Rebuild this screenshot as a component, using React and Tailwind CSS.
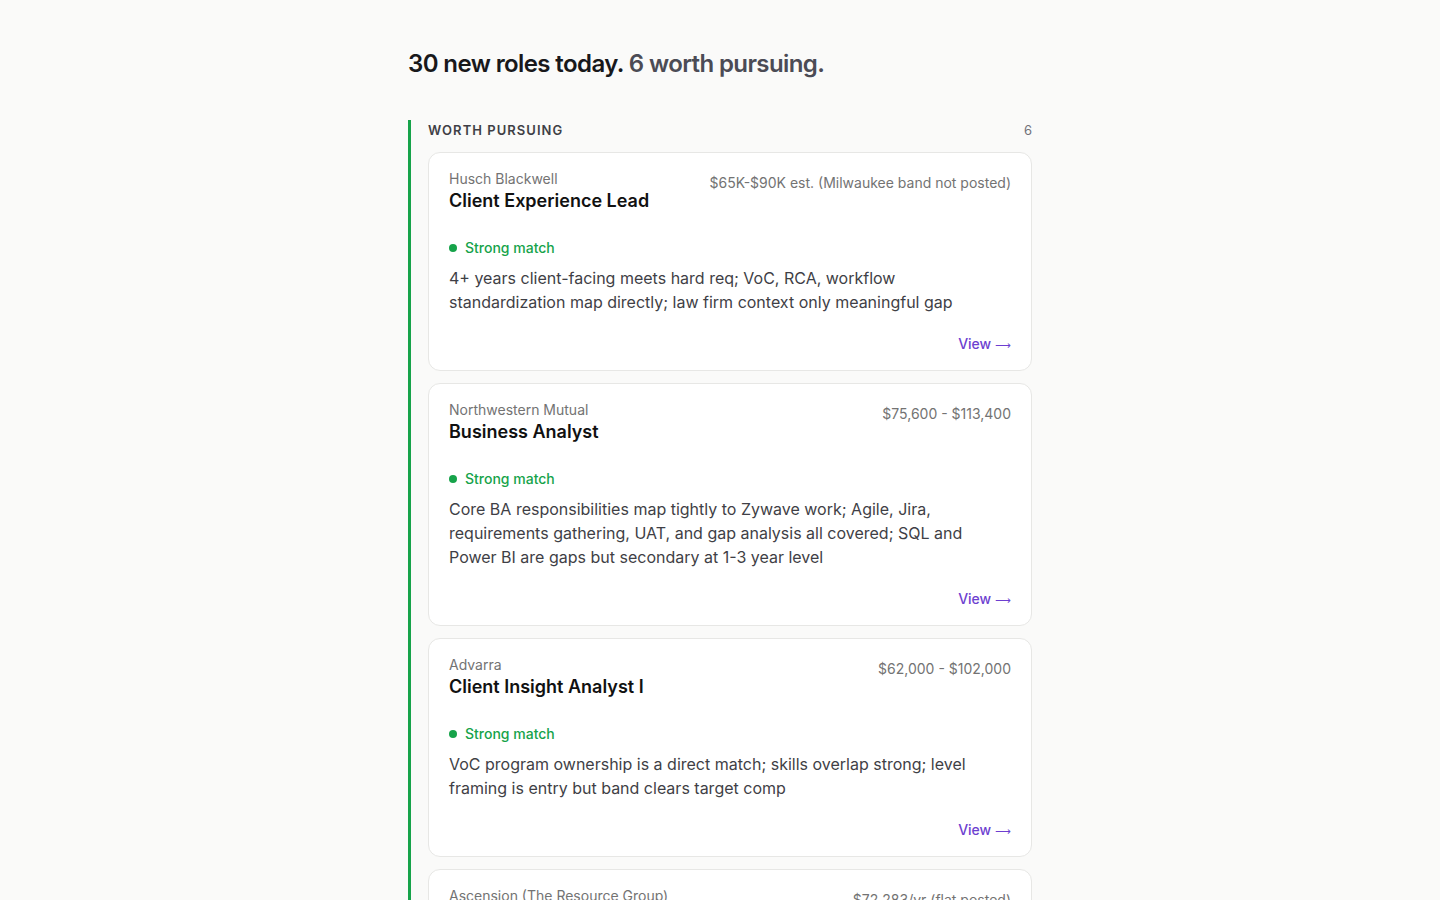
const roles = [
  {
    company: "Husch Blackwell",
    title: "Client Experience Lead",
    pay: "$65K-$90K est. (Milwaukee band not posted)",
    note: "4+ years client-facing meets hard req; VoC, RCA, workflow standardization map directly; law firm context only meaningful gap",
  },
  {
    company: "Northwestern Mutual",
    title: "Business Analyst",
    pay: "$75,600 - $113,400",
    note: "Core BA responsibilities map tightly to Zywave work; Agile, Jira, requirements gathering, UAT, and gap analysis all covered; SQL and Power BI are gaps but secondary at 1-3 year level",
  },
  {
    company: "Advarra",
    title: "Client Insight Analyst I",
    pay: "$62,000 - $102,000",
    note: "VoC program ownership is a direct match; skills overlap strong; level framing is entry but band clears target comp",
  },
  {
    company: "Ascension (The Resource Group)",
    title: "Patient Experience Analyst",
    pay: "$72,283/yr (flat posted)",
    note: "Survey program administration and stakeholder reporting align with current role; healthcare context is new but transferable",
  },
];

function RoleCard({ role }) {
  return (
    <div className="rounded-xl border border-[#e7e7e5] bg-white px-5 pt-4 pb-4">
      <div className="flex items-start justify-between gap-6">
        <div>
          <div className="text-[14px] leading-[20px] text-[#737373]">{role.company}</div>
          <div className="text-[18px] leading-[23px] font-semibold text-[#111111]">{role.title}</div>
        </div>
        <div className="mt-1 text-[14px] leading-[20px] text-[#737373] whitespace-nowrap">{role.pay}</div>
      </div>
      <div className="mt-[26px] flex items-center gap-2 text-[14px] leading-[20px] font-medium text-[#16a34a]">
        <span className="h-2 w-2 rounded-full bg-[#16a34a]" />
        Strong match
      </div>
      <p className="mt-2 text-[16px] leading-[24px] text-[#3f3f46]">{role.note}</p>
      <div className="mt-5 flex h-5 items-center justify-end gap-1 overflow-hidden text-[#6d3fd0]">
        <span className="text-[14px] leading-[20px] font-medium">View</span>
        <span
          style={{ fontFamily: "'DejaVu Sans', sans-serif" }}
          className="text-[11px] leading-none mt-[2px]"
        >
          ⟶
        </span>
      </div>
    </div>
  );
}

export default function App() {
  return (
    <div
      className="min-h-screen bg-[#fafaf9]"
      style={{ fontFamily: "Inter, 'Noto Sans', sans-serif" }}
    >
      <div className="mx-auto w-[624px] pt-12">
        <h1 className="text-[24px] leading-[32px] font-semibold tracking-[-0.025em] text-[#18181b]">
          30 new roles today. <span className="text-[#4b4b55]">6 worth pursuing.</span>
        </h1>
        <section className="mt-10 border-l-[3px] border-[#16a34a] pl-[17px] pb-10">
          <div className="flex items-center justify-between">
            <h2 className="text-[13px] leading-[20px] font-semibold tracking-[0.08em] text-[#3f3f46]">
              WORTH PURSUING
            </h2>
            <span className="text-[13px] leading-[20px] text-[#71717a]">6</span>
          </div>
          <div className="mt-3 flex flex-col gap-3">
            {roles.map((r) => (
              <RoleCard key={r.title} role={r} />
            ))}
          </div>
        </section>
      </div>
    </div>
  );
}
